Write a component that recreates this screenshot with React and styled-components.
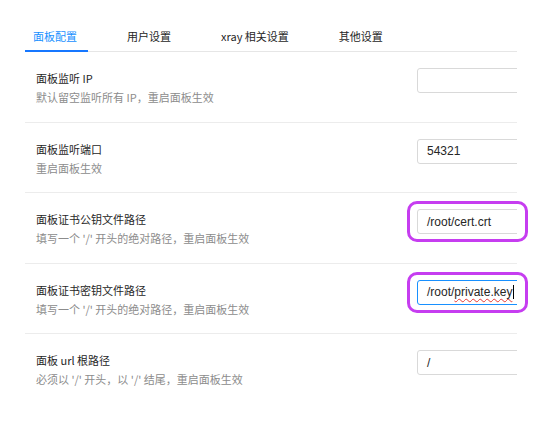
import React from "react";
import styled, { createGlobalStyle, css } from "styled-components";

const Global = createGlobalStyle`
  html, body { margin: 0; padding: 0; background: #fff; }
  body { font-family: "Noto Sans CJK SC", "Noto Sans", sans-serif; }
  * { box-sizing: border-box; }
`;

const Page = styled.div`
  width: 554px;
  height: 424px;
  padding: 20px 37px 0 25px;
  overflow: hidden;
`;

const TabBar = styled.div`
  display: flex;
  height: 32px;
  box-shadow: inset 0 -1px #e6e6e6;
`;

const Tab = styled.div`
  position: relative;
  display: flex;
  align-items: center;
  padding: 0 11px 0 8px;
  margin-right: 31px;
  font-size: 11px;
  line-height: 16px;
  color: ${(p) => (p.$active ? "#1890ff" : "#262626")};
  white-space: nowrap;
  ${(p) =>
    p.$active &&
    css`
      &::after {
        content: "";
        position: absolute;
        left: 0;
        right: 0;
        bottom: 0;
        height: 2px;
        background: #1677ff;
      }
    `}
`;

const List = styled.div`
  display: flex;
  flex-direction: column;
`;

const Row = styled.div`
  display: grid;
  grid-template-columns: 1fr 100px;
  height: 70.5px;
  border-bottom: ${(p) => (p.$last ? "none" : "1px solid #ececec")};
`;

const Meta = styled.div`
  padding: 18px 0 0 11px;
`;

const Title = styled.div`
  font-size: 11px;
  line-height: 16px;
  color: #262626;
`;

const Desc = styled.div`
  margin-top: 3px;
  font-size: 11px;
  line-height: 16px;
  color: #8c8c8c;
`;

const InputCell = styled.div`
  position: relative;
  margin-top: 16px;
  height: 25px;
`;

const Clip = styled.div`
  width: 100px;
  height: 25px;
  overflow: hidden;
`;

const Field = styled.div`
  width: 160px;
  height: 25px;
  display: flex;
  align-items: center;
  padding-left: 9px;
  border: 1px solid ${(p) => (p.$focused ? "#1890ff" : "#d9d9d9")};
  border-radius: 3px;
  background: #fff;
  font-family: "Liberation Sans", Arial, sans-serif;
  font-size: 12px;
  color: #262626;
  white-space: nowrap;
`;

const Misspelt = styled.span`
  text-decoration: underline wavy #e53935;
  text-decoration-thickness: 1px;
  text-underline-offset: 2px;
`;

const Caret = styled.span`
  display: inline-block;
  width: 1px;
  height: 14px;
  margin-left: 1px;
  background: #000;
`;

const Ring = styled.div`
  position: absolute;
  left: -10px;
  width: 121px;
  top: -8px;
  bottom: -8px;
  border: 3px solid #c63df0;
  border-radius: 10px;
  pointer-events: none;
`;

const rows = [
  { title: "面板监听 IP", desc: "默认留空监听所有 IP，重启面板生效", value: "" },
  { title: "面板监听端口", desc: "重启面板生效", value: "54321" },
  {
    title: "面板证书公钥文件路径",
    desc: "填写一个 '/' 开头的绝对路径，重启面板生效",
    value: "/root/cert.crt",
    ring: true,
  },
  {
    title: "面板证书密钥文件路径",
    desc: "填写一个 '/' 开头的绝对路径，重启面板生效",
    value: "/root/private.key",
    ring: true,
    focused: true,
  },
  { title: "面板 url 根路径", desc: "必须以 '/' 开头，以 '/' 结尾，重启面板生效", value: "/" },
];

const tabs = ["面板配置", "用户设置", "xray 相关设置", "其他设置"];

export default function App() {
  return (
    <>
      <Global />
      <Page>
        <TabBar>
          {tabs.map((t, i) => (
            <Tab key={t} $active={i === 0}>
              {t}
            </Tab>
          ))}
        </TabBar>
        <List>
          {rows.map((r, i) => (
            <Row key={r.title} $last={i === rows.length - 1}>
              <Meta>
                <Title>{r.title}</Title>
                <Desc>{r.desc}</Desc>
              </Meta>
              <InputCell>
                <Clip>
                  <Field $focused={r.focused}>
                    {r.focused ? (
                      <>
                        /root/<Misspelt>private.key</Misspelt>
                        <Caret />
                      </>
                    ) : (
                      r.value
                    )}
                  </Field>
                </Clip>
                {r.ring && <Ring />}
              </InputCell>
            </Row>
          ))}
        </List>
      </Page>
    </>
  );
}
